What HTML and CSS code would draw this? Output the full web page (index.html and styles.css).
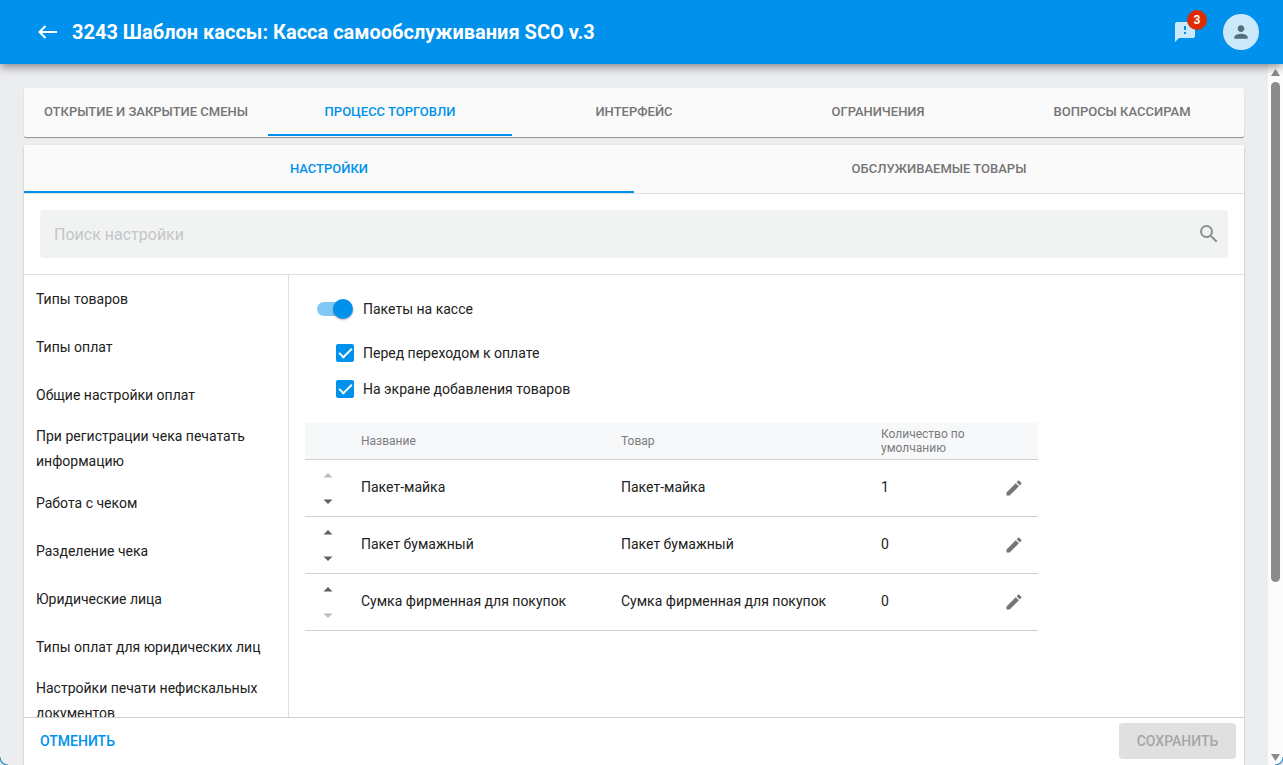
FILE: index.html
```html
<!DOCTYPE html>
<html lang="ru">
<head>
  <meta charset="UTF-8">
  <meta name="viewport" content="width=device-width, initial-scale=1.0">
  <title>Шаблон кассы</title>
  <link rel="stylesheet" href="styles.css">
</head>
<body>
  <header class="topbar">
    <button class="icon-btn" aria-label="Назад">
      <svg width="20" height="16" viewBox="0 0 20 16" fill="none" stroke="#fff" stroke-width="2"><path d="M19 8H2M7.500 2L1.500 8l6 6"/></svg>
    </button>
    <h1>3243 Шаблон кассы: Касса самообслуживания SCO v.3</h1>
    <button class="icon-btn notice" aria-label="Уведомления">
      <svg width="24" height="24" viewBox="0 0 24 24" fill="#cce9fc"><path d="M20 2H4c-1.100 0-2 .9-2 2v18l4-4h14c1.100 0 2-.9 2-2V4c0-1.100-.9-2-2-2zm-7 12h-2v-2h2v2zm0-4h-2V6h2v4z"/></svg>
      <span class="badge">3</span>
    </button>
    <button class="avatar" aria-label="Профиль">
      <svg width="20" height="20" viewBox="0 0 24 24" fill="#546e7a"><path d="M12 12c2.210 0 4-1.790 4-4s-1.790-4-4-4-4 1.790-4 4 1.790 4 4 4zm0 2c-2.670 0-8 1.340-8 4v2h16v-2c0-2.660-5.330-4-8-4z"/></svg>
    </button>
  </header>

  <div class="page">
    <main class="content">
      <nav class="tabs card">
        <button class="tab">ОТКРЫТИЕ И ЗАКРЫТИЕ СМЕНЫ</button>
        <button class="tab active">ПРОЦЕСС ТОРГОВЛИ</button>
        <button class="tab">ИНТЕРФЕЙС</button>
        <button class="tab">ОГРАНИЧЕНИЯ</button>
        <button class="tab">ВОПРОСЫ КАССИРАМ</button>
      </nav>

      <section class="panel card">
        <nav class="tabs subtabs">
          <button class="tab active">НАСТРОЙКИ</button>
          <button class="tab">ОБСЛУЖИВАЕМЫЕ ТОВАРЫ</button>
        </nav>

        <div class="search">
          <div class="search-box">
            <input type="text" placeholder="Поиск настройки" aria-label="Поиск настройки">
            <svg width="24" height="24" viewBox="0 0 24 24" fill="#8f9190"><path d="M15.500 14h-.79l-.28-.27A6.470 6.470 0 0 0 16 9.500 6.500 6.500 0 1 0 9.500 16c1.610 0 3.090-.59 4.230-1.570l.27.28v.79l5 4.990L20.490 19l-4.990-5zm-6 0C7.010 14 5 11.990 5 9.500S7.010 5 9.500 5 14 7.010 14 9.500 11.990 14 9.500 14z"/></svg>
          </div>
        </div>

        <div class="settings">
          <nav class="menu">
            <a href="#">Типы товаров</a>
            <a href="#">Типы оплат</a>
            <a href="#">Общие настройки оплат</a>
            <a href="#">При регистрации чека печатать информацию</a>
            <a href="#">Работа с чеком</a>
            <a href="#">Разделение чека</a>
            <a href="#">Юридические лица</a>
            <a href="#">Типы оплат для юридических лиц</a>
            <a href="#">Настройки печати нефискальных документов</a>
          </nav>

          <div class="options">
            <label class="option main-option"><input type="checkbox" class="switch" checked>Пакеты на кассе</label>
            <label class="option"><input type="checkbox" class="check" checked>Перед переходом к оплате</label>
            <label class="option"><input type="checkbox" class="check" checked>На экране добавления товаров</label>

            <table>
              <thead>
                <tr>
                  <th class="col-move"></th>
                  <th class="col-name">Название</th>
                  <th class="col-name">Товар</th>
                  <th>Количество по умолчанию</th>
                  <th class="col-edit"></th>
                </tr>
              </thead>
              <tbody id="packages"></tbody>
            </table>
          </div>
        </div>

        <footer class="actions">
          <button class="btn cancel">ОТМЕНИТЬ</button>
          <button class="btn save" disabled>СОХРАНИТЬ</button>
        </footer>
      </section>
    </main>

    <div class="scrollbar">
      <svg width="9" height="7" viewBox="0 0 9 7"><path d="M4.500 0L9 7H0z"/></svg>
      <div class="track"><div class="thumb"></div></div>
      <svg width="9" height="7" viewBox="0 0 9 7"><path d="M4.500 7L9 0H0z"/></svg>
    </div>
  </div>

  <span class="corner left"></span>
  <span class="corner right"></span>

  <script>
    const packages = [
      { name: 'Пакет-майка', count: 1 },
      { name: 'Пакет бумажный', count: 0 },
      { name: 'Сумка фирменная для покупок', count: 0 }
    ];

    document.getElementById('packages').innerHTML = packages.map((p, i) => `
      <tr>
        <td class="col-move">
          <div class="move">
            <button aria-label="Выше" ${i === 0 ? 'disabled' : ''}><svg width="10" height="5" viewBox="0 0 10 5"><path d="M0.500 4.500L5 0l4.500 4.500z"/></svg></button>
            <button aria-label="Ниже" ${i === packages.length - 1 ? 'disabled' : ''}><svg width="10" height="5" viewBox="0 0 10 5"><path d="M0.500 0.500L5 5l4.500-4.500z"/></svg></button>
          </div>
        </td>
        <td>${p.name}</td>
        <td>${p.name}</td>
        <td>${p.count}</td>
        <td class="col-edit">
          <button class="icon-btn" aria-label="Изменить"><svg width="20" height="20" viewBox="0 0 24 24" fill="#757575"><path d="M3 17.250V21h3.750L17.810 9.940l-3.750-3.750L3 17.250zM20.710 7.040a1 1 0 0 0 0-1.410l-2.340-2.340a1 1 0 0 0-1.410 0l-1.830 1.830 3.750 3.750 1.830-1.830z"/></svg></button>
        </td>
      </tr>
    `).join('');
  </script>
</body>
</html>
```
FILE: styles.css
```css
* {
  box-sizing: border-box;
}
body {
  margin: 0;
  height: 100vh;
  display: flex;
  flex-direction: column;
  overflow: hidden;
  background: #ecedef;
  color: #212121;
  font-family: Roboto, sans-serif;
  font-size: 14px;
}
button {
  font-family: inherit;
  border: none;
  background: none;
  padding: 0;
  cursor: pointer;
}
svg {
  display: block;
}
.topbar {
  position: relative;
  z-index: 1;
  flex: none;
  height: 64px;
  padding: 0 24px 0 38px;
  display: flex;
  align-items: center;
  background: #0091ec;
  color: white;
  box-shadow: 0 2px 10px rgba(0,0,0,0.5);
}
.topbar h1 {
  flex: 1;
  margin: 0 0 0 14px;
  font-size: 20px;
  font-weight: 700;
}
.icon-btn {
  display: inline-flex;
}
.notice {
  position: relative;
  margin-right: 26px;
}
.badge {
  position: absolute;
  top: -10px;
  right: -10px;
  width: 20px;
  height: 20px;
  border-radius: 50%;
  background: #dd2c00;
  color: white;
  font-size: 12px;
  font-weight: 700;
  line-height: 20px;
}
.avatar {
  display: flex;
  align-items: center;
  justify-content: center;
  width: 36px;
  height: 36px;
  border-radius: 50%;
  background: #cce9fc;
}
.page {
  flex: 1;
  min-height: 0;
  display: flex;
}
.content {
  flex: 1;
  min-width: 0;
  padding: 24px 24px 0;
  display: flex;
  flex-direction: column;
  gap: 8px;
}
.card {
  border-radius: 2px;
  box-shadow: 0 1px 2px rgba(0,0,0,0.3);
}
.tabs {
  flex: none;
  display: flex;
  height: 49px;
  background: #fafafa;
}
.tabs.card {
  box-shadow: 0 1px 1px rgba(0,0,0,0.4);
}
.tab {
  flex: 1;
  height: 48px;
  border-bottom: 2px solid transparent;
  color: #757575;
  font-size: 13px;
  font-weight: 500;
}
.tab.active {
  color: #0091ec;
  border-bottom-color: #0091ec;
}
.panel {
  flex: 1;
  min-height: 0;
  display: flex;
  flex-direction: column;
  background: white;
}
.subtabs {
  border-bottom: 1px solid #e0e0e0;
}
.search {
  padding: 16px;
  border-bottom: 1px solid #e0e0e0;
}
.search-box {
  display: flex;
  align-items: center;
  height: 48px;
  padding: 0 7px 0 14px;
  border-radius: 4px;
  background: #f1f3f3;
}
.search-box input {
  flex: 1;
  border: none;
  outline: none;
  padding: 0;
  background: none;
  font-family: inherit;
  font-size: 16px;
}
.search-box input::placeholder {
  color: #c4c6c7;
}
.settings {
  flex: 1;
  min-height: 0;
  display: flex;
  overflow: hidden;
}
.menu {
  flex: none;
  width: 265px;
  border-right: 1px solid #e0e0e0;
  overflow-x: hidden;
  overflow-y: auto;
  scrollbar-width: none;
}
.menu a {
  display: flex;
  align-items: center;
  min-height: 48px;
  padding: 5px 12px;
  color: #212121;
  line-height: 25px;
  text-decoration: none;
}
.options {
  padding: 16px;
}
.option {
  display: flex;
  align-items: center;
  height: 36px;
  padding-left: 31px;
}
.main-option {
  margin-bottom: 8px;
  padding-left: 12px;
}
.switch {
  appearance: none;
  position: relative;
  width: 36px;
  height: 20px;
  margin: 0 10px 0 0;
}
.switch::before {
  content: "";
  position: absolute;
  top: 3px;
  left: 0;
  width: 34px;
  height: 14px;
  border-radius: 7px;
  background: #80c8f5;
}
.switch::after {
  content: "";
  position: absolute;
  right: 0;
  width: 20px;
  height: 20px;
  border-radius: 50%;
  background: #0091ec;
  box-shadow: 0 1px 2px rgba(0,0,0,0.3);
}
.check {
  appearance: none;
  width: 18px;
  height: 18px;
  margin: 0 9px 0 0;
  border-radius: 2px;
  background: #0091ec;
  display: flex;
  align-items: center;
  justify-content: center;
}
.check::before {
  content: "";
  flex: none;
  box-sizing: border-box;
  width: 13px;
  height: 7px;
  margin-bottom: 4px;
  border-left: 2px solid white;
  border-bottom: 2px solid white;
  transform: rotate(-45deg);
}
table {
  width: 733px;
  margin-top: 16px;
  border-collapse: separate;
  border-spacing: 0;
  table-layout: fixed;
}
th {
  height: 37px;
  padding: 0;
  background: #f6f8fa;
  border-bottom: 1px solid #cfcfcf;
  color: #7b7b7b;
  font-size: 12px;
  font-weight: 400;
  line-height: 14px;
  text-align: left;
}
td {
  height: 57px;
  padding: 0 0 2px;
  border-bottom: 1px solid #cfcfcf;
}
.col-move {
  width: 56px;
  padding: 0;
}
.col-name {
  width: 260px;
}
.col-edit {
  width: 48px;
  padding: 0;
  text-align: center;
  vertical-align: middle;
}
td .icon-btn {
  vertical-align: middle;
}
.move {
  display: flex;
  flex-direction: column;
  align-items: center;
  gap: 21px;
  width: 46px;
}
.move svg {
  fill: #616161;
}
.move button:disabled svg {
  fill: #bdbdbd;
}
.actions {
  flex: none;
  display: flex;
  align-items: center;
  justify-content: space-between;
  height: 48px;
  padding: 0 8px 2px 16px;
  border-top: 1px solid #cfcfcf;
  background: white;
}
.btn {
  height: 36px;
  border-radius: 4px;
  font-size: 14px;
  font-weight: 500;
}
.cancel {
  color: #0091ec;
}
.save {
  width: 117px;
  background: #e0e0e0;
  color: #a6a6a6;
}
.scrollbar {
  flex: none;
  display: flex;
  flex-direction: column;
  align-items: center;
  gap: 6px;
  width: 15px;
  padding: 5px 0 4px;
  background: #fcfcfc;
}
.scrollbar svg {
  fill: #8b8b8b;
}
.track {
  flex: 1;
}
.thumb {
  width: 9px;
  height: 75%;
  border-radius: 5px;
  background: #8b8b8b;
}
.corner {
  position: fixed;
  bottom: 0;
  width: 8px;
  height: 8px;
}
.corner.left {
  left: 0;
  background: radial-gradient(circle at top right, transparent 7px, #1976b8 8px, #d6e6f2 9px);
}
.corner.right {
  right: 0;
  background: radial-gradient(circle at top left, transparent 7px, #1976b8 8px, #d6e6f2 9px);
}
```
